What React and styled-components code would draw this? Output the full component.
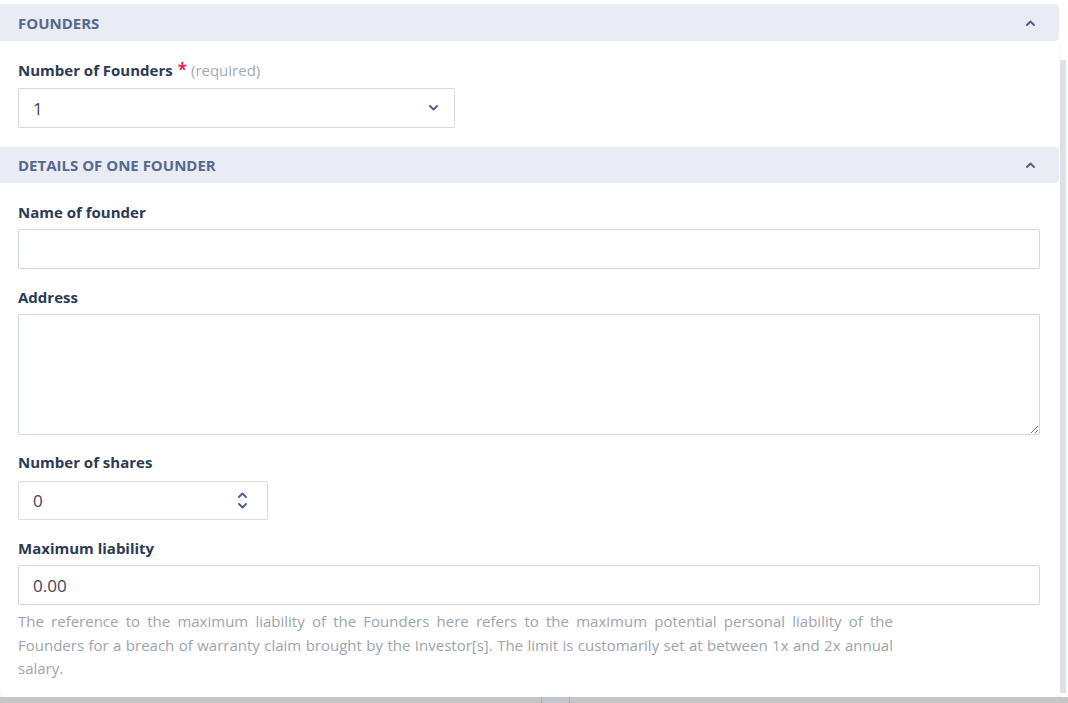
import React from "react";
import styled, { createGlobalStyle } from "styled-components";

const Global = createGlobalStyle`
  html, body {
    margin: 0;
    padding: 0;
    background: #fff;
    font-family: "Open Sans", "Liberation Sans", sans-serif;
  }
`;

const Page = styled.div`
  width: 1068px;
  height: 703px;
  display: flex;
  flex-direction: column;
  overflow: hidden;
  background: #fff;
`;

const Frame = styled.div`
  flex: 1;
  display: flex;
  flex-direction: column;
  padding-top: 4px;
  min-height: 0;
`;

const Band = styled.div`
  width: 1059px;
  height: ${(p) => p.h || 37}px;
  box-sizing: border-box;
  background: #e9ecf3;
  border-radius: 0 4px 4px 0;
  display: flex;
  align-items: center;
  justify-content: space-between;
  padding: 0 24px 0 18px;
  flex-shrink: 0;
`;

const BandTitle = styled.div`
  font-size: 15px;
  font-weight: 700;
  color: #56688f;
  text-transform: uppercase;
`;

const Body = styled.div`
  flex: 1;
  display: flex;
  min-height: 0;
`;

const Panel = styled.div`
  width: 1060px;
  background: #fff;
  border-radius: 0 0 4px 4px;
  box-shadow: 0 1px 2px rgba(0, 0, 0, 0.12);
  display: flex;
  flex-direction: column;
`;

const Section = styled.div`
  padding: 19px 20px 19px 18px;
  display: flex;
  flex-direction: column;
`;

const Field = styled.div`
  display: flex;
  flex-direction: column;
  margin-bottom: ${(p) => (p.last ? 0 : p.gap || 18)}px;
`;

const Label = styled.div`
  font-size: 15px;
  line-height: 20px;
  font-weight: 700;
  color: #2b3a55;
  margin-bottom: ${(p) => p.mb || 7}px;
`;

const Star = styled.span`
  color: #e0266a;
  font-size: 17px;
  margin-left: 5px;
`;

const Req = styled.span`
  color: #a3aab8;
  font-weight: 400;
  margin-left: 4px;
`;

const Box = styled.div`
  box-sizing: border-box;
  width: ${(p) => p.w || "100%"};
  height: ${(p) => p.h || 40}px;
  border: 1px solid ${(p) => p.border || "#cfd8e7"};
  border-radius: 2px;
  display: flex;
  align-items: center;
  justify-content: space-between;
  padding: 0 14px 0 14px;
  font-size: 17px;
  color: #3f4654;
  background: #fff;
`;

const TextArea = styled.textarea`
  box-sizing: border-box;
  width: 100%;
  height: 121px;
  border: 1px solid #cfd8e7;
  border-radius: 2px;
  resize: vertical;
  font-family: inherit;
  font-size: 16px;
  outline: none;
  margin: 0;
  display: block;
`;

const Help = styled.p`
  width: 875px;
  margin: 5px 0 0;
  font-size: 15px;
  line-height: 23.5px;
  color: #9ea4ae;
  text-align: justify;
`;

const Scroll = styled.div`
  width: 6px;
  margin: 19px 0 4px 0;
  background: #dde2ea;
`;

const Footer = styled.div`
  height: 6px;
  background: #c6c6c6;
  display: flex;
  padding-left: 541px;
  flex-shrink: 0;
`;

const Grip = styled.div`
  width: 27px;
  border-left: 1px solid #a9adb6;
  border-right: 1px solid #a9adb6;
  background: #c3c6cd;
`;

const Spin = styled.div`
  display: flex;
  flex-direction: column;
  gap: 5px;
  margin-right: 6px;
`;

const Chevron = ({ up }) => (
  <svg width="9" height="6" viewBox="0 0 9 6">
    <polyline
      points={up ? "1,5 4.5,1.5 8,5" : "1,1 4.5,4.5 8,1"}
      fill="none"
      stroke="#4d5e86"
      strokeWidth="1.9"
      strokeLinecap="round"
      strokeLinejoin="round"
    />
  </svg>
);

export default function App() {
  return (
    <Page>
      <Global />
      <Frame>
        <Band>
          <BandTitle>Founders</BandTitle>
          <Chevron up />
        </Band>
        <Body>
          <Panel>
            <Section>
              <Field last>
                <Label mb={8}>
                  Number of Founders<Star>*</Star>
                  <Req>(required)</Req>
                </Label>
                <Box w="437px" border="#d9d9d9" style={{ paddingRight: 16 }}>
                  <span>1</span>
                  <Chevron />
                </Box>
              </Field>
            </Section>
            <Band h={36}>
              <BandTitle>Details of one founder</BandTitle>
              <Chevron up />
            </Band>
            <Section>
              <Field>
                <Label>Name of founder</Label>
                <Box />
              </Field>
              <Field gap={17}>
                <Label>Address</Label>
                <TextArea />
              </Field>
              <Field>
                <Label mb={9}>Number of shares</Label>
                <Box w="250px" h={39} border="#d7dce4">
                  <span>0</span>
                  <Spin>
                    <Chevron up />
                    <Chevron />
                  </Spin>
                </Box>
              </Field>
              <Field last>
                <Label>Maximum liability</Label>
                <Box>
                  <span>0.00</span>
                </Box>
                <Help>
                  The reference to the maximum liability of the Founders here refers to the maximum
                  potential personal liability of the Founders for a breach of warranty claim brought
                  by the Investor[s]. The limit is customarily set at between 1x and 2x annual
                  salary.
                </Help>
              </Field>
            </Section>
          </Panel>
          <Scroll />
        </Body>
      </Frame>
      <Footer>
        <Grip />
      </Footer>
    </Page>
  );
}
